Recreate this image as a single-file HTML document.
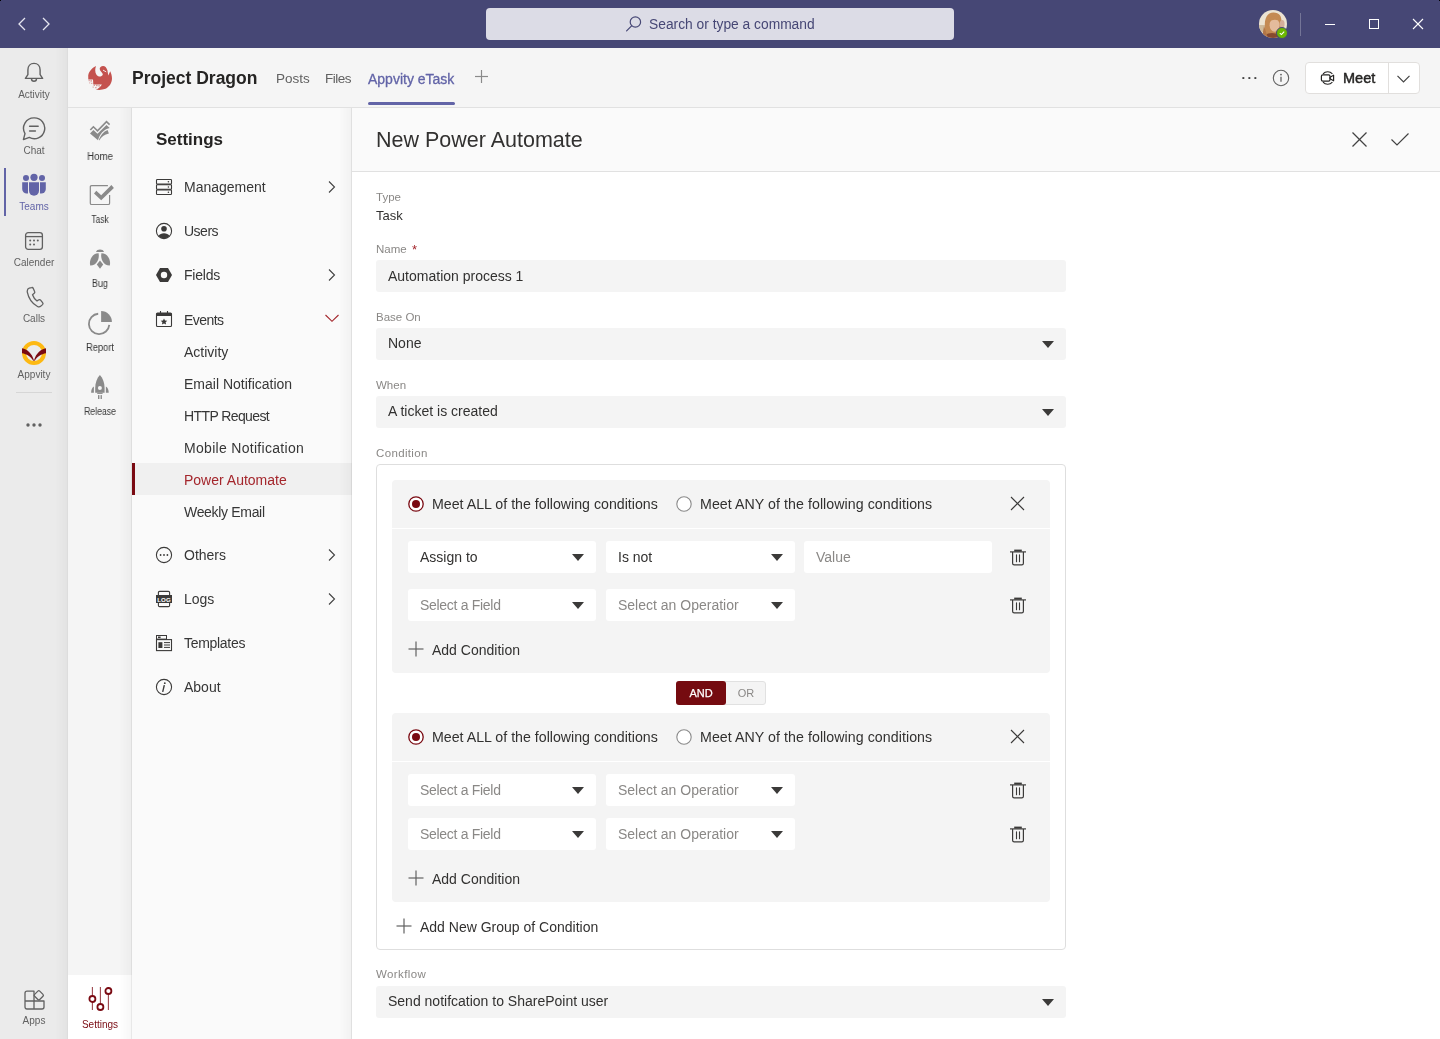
<!DOCTYPE html>
<html><head><meta charset="utf-8"><title>New Power Automate</title>
<style>
*{box-sizing:border-box;margin:0;padding:0}
html,body{width:1440px;height:1039px;overflow:hidden;font-family:"Liberation Sans", sans-serif;background:#fff;position:relative}
svg{display:block}
body>div{will-change:transform}
</style></head><body>
<div style="position:absolute;left:0px;top:0px;width:1440px;height:1039px;background:#fff"></div>
<div style="position:absolute;left:0px;top:0px;width:1440px;height:48px;background:#464775"></div>
<div style="position:absolute;left:0px;top:48px;width:68px;height:991px;background:#ebebeb"></div>
<div style="position:absolute;left:55px;top:48px;width:12px;height:991px;background:linear-gradient(90deg,rgba(0,0,0,0) 0%,rgba(0,0,0,0.03) 100%)"></div>
<div style="position:absolute;left:67px;top:48px;width:1px;height:991px;background:rgba(0,0,0,0.06)"></div>
<div style="position:absolute;left:68px;top:48px;width:1372px;height:60px;background:#f5f5f5"></div>
<div style="position:absolute;left:68px;top:107px;width:1372px;height:1px;background:#e1e1e1"></div>
<div style="position:absolute;left:68px;top:108px;width:64px;height:931px;background:#f5f5f5"></div>
<div style="position:absolute;left:132px;top:108px;width:220px;height:931px;background:#fafafa"></div>
<div style="position:absolute;left:352px;top:108px;width:1088px;height:931px;background:#fff"></div>
<div style="position:absolute;left:352px;top:108px;width:1088px;height:63px;background:#fafafa"></div>
<div style="position:absolute;left:352px;top:171px;width:1088px;height:1px;background:#e1e1e1"></div>
<svg style="position:absolute;left:14px;top:14px;" width="40" height="20" viewBox="0 0 40 20"><polyline points="11,4 5,10 11,16" fill="none" stroke="#e6e6f0" stroke-width="1.3"/><polyline points="29,4 35,10 29,16" fill="none" stroke="#e6e6f0" stroke-width="1.3"/></svg>
<div style="position:absolute;left:486px;top:8px;width:468px;height:32px;background:#dcdce6;border-radius:4px"></div>
<svg style="position:absolute;left:624px;top:14px;" width="20" height="20" viewBox="0 0 20 20"><circle cx="11.4" cy="8" r="5.2" fill="none" stroke="#464775" stroke-width="1.2"/><line x1="7.6" y1="11.8" x2="2.6" y2="16.8" stroke="#464775" stroke-width="1.2" stroke-linecap="round"/></svg>
<div style="position:absolute;left:649px;top:18.42px;font-size:13.8px;line-height:1;color:#464775;font-weight:400;white-space:nowrap;">Search or type a command</div>
<svg style="position:absolute;left:1259px;top:10px;" width="28" height="28" viewBox="0 0 28 28"><defs><clipPath id="avc"><circle cx="14" cy="14" r="14"/></clipPath><filter id="avb" x="-10%" y="-10%" width="120%" height="120%"><feGaussianBlur stdDeviation="0.7"/></filter></defs><g clip-path="url(#avc)"><rect width="28" height="28" fill="#ece3d2"/><g filter="url(#avb)"><rect x="-2" y="15" width="10" height="7" fill="#cfbb9c"/><path d="M6 18C5 8 8.5 2.6 14.5 2.6S22.5 6 22.6 12L22 19L13 28H5z" fill="#c48a52"/><ellipse cx="15.6" cy="15.2" rx="5" ry="6.6" fill="#e4bb9c"/><path d="M9.5 10.5C11 5.5 18 4.5 21 8.5L21.5 12C19 9.5 14 8.5 10 12z" fill="#c48a52"/><ellipse cx="23.2" cy="14" rx="2.4" ry="4" fill="#d6ae9a"/><ellipse cx="13" cy="30" rx="10" ry="7" fill="#874a2e"/><path d="M5 16l4 12H3z" fill="#b37646"/></g></g></svg>
<div style="position:absolute;left:1276px;top:27px;width:12px;height:12px;border-radius:50%;background:#6bb700;border:1px solid #464775"></div>
<svg style="position:absolute;left:1278px;top:29px;" width="8" height="8" viewBox="0 0 8 8"><polyline points="1.8,4.2 3.4,5.6 6.2,2.6" fill="none" stroke="#fff" stroke-width="1.1"/></svg>
<div style="position:absolute;left:1300px;top:13px;width:1px;height:23px;background:rgba(255,255,255,0.25)"></div>
<div style="position:absolute;left:1325px;top:24px;width:10px;height:1px;background:#fff"></div>
<div style="position:absolute;left:1369px;top:19px;width:10px;height:10px;border:1px solid #fff"></div>
<svg style="position:absolute;left:1412px;top:18px;" width="12" height="12" viewBox="0 0 12 12"><line x1="1" y1="1" x2="11" y2="11" stroke="#fff" stroke-width="1.1"/><line x1="11" y1="1" x2="1" y2="11" stroke="#fff" stroke-width="1.1"/></svg>
<svg style="position:absolute;left:24px;top:62px;" width="20" height="22" viewBox="0 0 20 22"><path d="M10 1.4C6.3 1.4 3.9 4.3 3.9 8V12.6L1.4 16.4H18.6L16.1 12.6V8C16.1 4.3 13.7 1.4 10 1.4Z" fill="none" stroke="#616161" stroke-width="1.4" stroke-linejoin="round"/><path d="M7.5 16.8a2.5 2.5 0 0 0 5 0" fill="none" stroke="#616161" stroke-width="1.4"/></svg>
<div style="position:absolute;left:4.00px;top:90.03px;width:60px;text-align:center;font-size:10px;line-height:1;color:#616161;font-weight:400;white-space:nowrap;">Activity</div>
<svg style="position:absolute;left:22px;top:116px;" width="24" height="26" viewBox="0 0 24 26"><path d="M12.1 1.9A10.4 10.4 0 1 1 7.3 21.4L1.4 23.6L3 17.6A10.4 10.4 0 0 1 12.1 1.9Z" fill="none" stroke="#616161" stroke-width="1.4" stroke-linejoin="round"/><line x1="7.6" y1="10.3" x2="16.2" y2="10.3" stroke="#616161" stroke-width="1.4" stroke-linecap="round"/><line x1="7.6" y1="15" x2="13.4" y2="15" stroke="#616161" stroke-width="1.4" stroke-linecap="round"/></svg>
<div style="position:absolute;left:4.00px;top:146.34px;width:60px;text-align:center;font-size:10px;line-height:1;color:#616161;font-weight:400;white-space:nowrap;">Chat</div>
<div style="position:absolute;left:4px;top:168px;width:2px;height:48px;background:#6264a7"></div>
<svg style="position:absolute;left:22px;top:173px;" width="24" height="24" viewBox="0 0 24 24"><circle cx="4" cy="5" r="3" fill="#6264a7"/><circle cx="12" cy="4.3" r="3.6" fill="#6264a7"/><circle cx="20" cy="5" r="3" fill="#6264a7"/><path d="M0.2 9.2h5.8v11.4H4.8A4.6 4.6 0 0 1 0.2 16z" fill="#6264a7"/><path d="M23.8 9.2H18v11.4h1.2A4.6 4.6 0 0 0 23.8 16z" fill="#6264a7"/><path d="M7 9.2h10v8.6a5 5 0 0 1-10 0z" fill="#6264a7"/></svg>
<div style="position:absolute;left:4.00px;top:201.53px;width:60px;text-align:center;font-size:10px;line-height:1;color:#6264a7;font-weight:400;white-space:nowrap;">Teams</div>
<svg style="position:absolute;left:24px;top:231px;" width="20" height="20" viewBox="0 0 20 20"><rect x="1.6" y="1.6" width="16.8" height="16.8" rx="2.6" fill="none" stroke="#616161" stroke-width="1.3"/><line x1="1.6" y1="5.6" x2="18.4" y2="5.6" stroke="#616161" stroke-width="1.3"/><g fill="#616161"><circle cx="6.2" cy="9.6" r="1"/><circle cx="10" cy="9.6" r="1"/><circle cx="13.8" cy="9.6" r="1"/><circle cx="6.2" cy="13.4" r="1"/><circle cx="10" cy="13.4" r="1"/></g></svg>
<div style="position:absolute;left:4.00px;top:258.04px;width:60px;text-align:center;font-size:10px;line-height:1;color:#616161;font-weight:400;white-space:nowrap;">Calender</div>
<svg style="position:absolute;left:24px;top:286px;" width="20" height="22" viewBox="0 0 20 22"><path d="M5.2 2.2l2.4-.6c.7-.2 1.4.2 1.7.9l1.3 3.1c.3.6.1 1.3-.4 1.7l-1.7 1.4c.9 2.6 2.4 4.6 4.5 6.2l1.9-1.1c.6-.3 1.3-.2 1.7.3l2 2.6c.5.6.4 1.4-.1 1.9l-1.6 1.5c-.9.8-2.3 1-3.4.4C8 17.5 4.6 12.4 3.3 6.1c-.2-1.8.6-3.5 1.9-3.9z" fill="none" stroke="#616161" stroke-width="1.3" stroke-linejoin="round"/></svg>
<div style="position:absolute;left:4.00px;top:313.84px;width:60px;text-align:center;font-size:10px;line-height:1;color:#616161;font-weight:400;white-space:nowrap;">Calls</div>
<svg style="position:absolute;left:21px;top:340px;" width="26" height="26" viewBox="0 0 26 26"><circle cx="13" cy="13" r="10" fill="none" stroke="#fdb913" stroke-width="4"/><path d="M1 8.2C6 9.2 11 13 13 20.5 15 13 20 9.2 25 8.2V13.2C20.5 13.8 16 16.8 13.6 20.8h-1.2C10 16.8 5.5 13.8 1 13.2z" fill="#7a0a12"/></svg>
<div style="position:absolute;left:4.00px;top:369.74px;width:60px;text-align:center;font-size:10px;line-height:1;color:#616161;font-weight:400;white-space:nowrap;">Appvity</div>
<div style="position:absolute;left:16px;top:392px;width:36px;height:1px;background:#d6d6d6"></div>
<svg style="position:absolute;left:24px;top:420px;" width="20" height="10" viewBox="0 0 20 10"><circle cx="4" cy="5" r="1.7" fill="#616161"/><circle cx="10" cy="5" r="1.7" fill="#616161"/><circle cx="16" cy="5" r="1.7" fill="#616161"/></svg>
<svg style="position:absolute;left:23px;top:988px;" width="22" height="22" viewBox="0 0 22 22"><path d="M2 5.2Q2 3.2 4 3.2H11V13H21V19Q21 21 19 21H4Q2 21 2 19Z" fill="none" stroke="#616161" stroke-width="1.3" stroke-linejoin="round"/><path d="M2 13H11V21" fill="none" stroke="#616161" stroke-width="1.3"/><rect x="12.2" y="3.7" width="7.2" height="7.2" rx="1.3" transform="rotate(45 15.8 7.3)" fill="#ebebeb" stroke="#616161" stroke-width="1.3"/></svg>
<div style="position:absolute;left:4.00px;top:1016.03px;width:60px;text-align:center;font-size:10px;line-height:1;color:#616161;font-weight:400;white-space:nowrap;">Apps</div>
<svg style="position:absolute;left:88px;top:66px;" width="24" height="24" viewBox="0 0 24 24"><path d="M8 0C4.5 1.5 1 5 0.2 9.5L0.3 13.4L5 13.6L5.3 18.4L13.9 18.4C12.5 21 10 22.8 7.7 23.6C11 24.3 14.5 23.9 17.6 22.8C21.5 20.6 24 16.8 24 12.5C24 10 23.3 7.5 22.2 5.2L20.3 9.6L19.4 4.3C18.5 1.5 17 0 15.1 0C13 0.1 11.7 1.4 11.7 2.8C11.8 4.4 13 5.6 14.5 7.4C15.2 8.4 14.8 9.6 12.6 10.5C10.6 10.6 9 9.6 8.2 8.2C7.1 6.5 6.8 3.5 8 0Z" fill="#c4524e"/><path d="M15 4.1L18.2 5.9" stroke="#f5f5f5" stroke-width="0.9"/><g fill="#c4524e" opacity="0.55"><rect x="0.6" y="14" width="1.2" height="1.2"/><rect x="2.4" y="14.2" width="1.6" height="1.4"/><rect x="1.2" y="16.4" width="1" height="1"/><rect x="3" y="16.8" width="1.4" height="1"/><rect x="5.6" y="18.8" width="1.4" height="1.2"/><rect x="8" y="18.8" width="1.6" height="1.4"/><rect x="10.4" y="19" width="1.4" height="1.6"/><rect x="4.6" y="20.6" width="1.2" height="1"/><rect x="7" y="21.2" width="1.6" height="1"/></g></svg>
<div style="position:absolute;left:132px;top:69.69px;font-size:17.5px;line-height:1;color:#252423;font-weight:700;white-space:nowrap;">Project Dragon</div>
<div style="position:absolute;left:276px;top:72.27px;font-size:13.5px;line-height:1;color:#616161;font-weight:400;white-space:nowrap;">Posts</div>
<div style="position:absolute;left:325px;top:72.27px;font-size:13.5px;line-height:1;color:#616161;font-weight:400;white-space:nowrap;letter-spacing:-0.5px">Files</div>
<div style="position:absolute;left:368px;top:71.85px;font-size:14px;line-height:1;color:#6264a7;font-weight:400;white-space:nowrap;-webkit-text-stroke:0.3px #6264a7">Appvity eTask</div>
<div style="position:absolute;left:368px;top:101.8px;width:87px;height:2.6px;background:#6264a7;border-radius:2px"></div>
<svg style="position:absolute;left:474px;top:69px;" width="16" height="16" viewBox="0 0 16 16"><line x1="7.5" y1="1" x2="7.5" y2="14" stroke="#8a8a8a" stroke-width="1.2"/><line x1="1" y1="7.5" x2="14" y2="7.5" stroke="#8a8a8a" stroke-width="1.2"/></svg>
<svg style="position:absolute;left:1240px;top:74px;" width="18" height="8" viewBox="0 0 18 8"><rect x="2.4" y="3.1" width="1.9" height="1.9" fill="#424242"/><rect x="8.4" y="3.1" width="1.9" height="1.9" fill="#424242"/><rect x="14.4" y="3.1" width="1.9" height="1.9" fill="#424242"/></svg>
<svg style="position:absolute;left:1272px;top:69px;" width="18" height="18" viewBox="0 0 18 18"><circle cx="9" cy="9" r="7.7" fill="none" stroke="#616161" stroke-width="1.1"/><circle cx="9" cy="5.6" r="0.9" fill="#616161"/><line x1="9" y1="7.8" x2="9" y2="12.8" stroke="#616161" stroke-width="1.3"/></svg>
<div style="position:absolute;left:1305px;top:62px;width:115px;height:32px;background:#fff;border:1px solid #e1dfdd;border-radius:4px"></div>
<div style="position:absolute;left:1388px;top:63px;width:1px;height:30px;background:#e1dfdd"></div>
<svg style="position:absolute;left:1319px;top:69px;" width="18" height="18" viewBox="0 0 18 18"><path d="M4 4.8A6.4 6.4 0 0 1 13.4 4.8" fill="none" stroke="#252423" stroke-width="1.1"/><path d="M4 13.2A6.4 6.4 0 0 0 13.4 13.2" fill="none" stroke="#252423" stroke-width="1.1"/><rect x="2.4" y="5.8" width="8.6" height="6.4" rx="1.4" fill="none" stroke="#252423" stroke-width="1.2"/><path d="M11 8.2L14.6 6.2V11.8L11 9.8z" fill="none" stroke="#252423" stroke-width="1.2" stroke-linejoin="round"/></svg>
<div style="position:absolute;left:1343px;top:71.43px;font-size:14.5px;line-height:1;color:#252423;font-weight:400;white-space:nowrap;-webkit-text-stroke:0.45px #252423">Meet</div>
<svg style="position:absolute;left:1396px;top:74px;" width="16" height="10" viewBox="0 0 16 10"><polyline points="1.5,1.8 7.5,7.8 13.5,1.8" fill="none" stroke="#424242" stroke-width="1.2"/></svg>
<svg style="position:absolute;left:86px;top:116px;" width="28" height="28" viewBox="0 0 28 28"><g fill="#8a8a8a"><path d="M4 17.5L7.4 14L11.5 17.8L20.5 8.9L23.7 12.1C21.5 12.6 19.5 13.6 18 14.8C15.5 16.6 13.2 19.6 12 24.3Z"/><path d="M12.9 24.3C14.2 19.6 17.5 15.6 21.6 14L22.9 17.5C18.5 18.6 15 21 13.5 24.3Z"/></g><path d="M4.3 14L7.4 10.8L11.5 14.8L20.5 5.7L23.6 8.6" fill="none" stroke="#8a8a8a" stroke-width="1.6"/></svg>
<div style="position:absolute;left:70.00px;top:151.73px;width:60px;text-align:center;font-size:10px;line-height:1;color:#363636;font-weight:400;white-space:nowrap;transform:scaleX(0.97)">Home</div>
<svg style="position:absolute;left:84px;top:180px;" width="32" height="32" viewBox="0 0 32 32"><path d="M23.9 5.7H7.6Q6.3 5.7 6.3 7V23.2Q6.3 24.5 7.6 24.5H24.3Q25.6 24.5 25.6 23.2V15.1" fill="none" stroke="#8a8a8a" stroke-width="1.2"/><path d="M10 13.5L12.3 10.8L17.2 15.3L27.4 5.1L29.9 7.9L17.2 20.3Z" fill="#8a8a8a"/></svg>
<div style="position:absolute;left:70.00px;top:215.03px;width:60px;text-align:center;font-size:10px;line-height:1;color:#363636;font-weight:400;white-space:nowrap;transform:scaleX(0.84)">Task</div>
<svg style="position:absolute;left:86px;top:244px;" width="28" height="28" viewBox="0 0 28 28"><g fill="#8a8a8a"><path d="M10 7.9C10.6 4.6 17.4 4.6 18 7.9Z"/><path d="M12.6 9.2C6.8 9 2.8 15.5 4.2 21.6C10.4 21.8 13.8 15 12.6 9.2Z"/><path d="M15.4 9.2C21.2 9 25.2 15.5 23.8 21.6C17.6 21.8 14.2 15 15.4 9.2Z"/><path d="M14 16.4L17.2 20.6L14 24.8L10.8 20.6Z"/></g></svg>
<div style="position:absolute;left:70.00px;top:279.04px;width:60px;text-align:center;font-size:10px;line-height:1;color:#363636;font-weight:400;white-space:nowrap;transform:scaleX(0.9)">Bug</div>
<svg style="position:absolute;left:84px;top:306px;" width="32" height="32" viewBox="0 0 32 32"><path d="M14.2 7.74A10.2 10.2 0 1 0 25.26 18.8" fill="none" stroke="#8a8a8a" stroke-width="1.8"/><path d="M17.1 15.9V5.1A10.8 10.8 0 0 1 27.9 15.9Z" fill="#8a8a8a"/></svg>
<div style="position:absolute;left:70.00px;top:343.04px;width:60px;text-align:center;font-size:10px;line-height:1;color:#363636;font-weight:400;white-space:nowrap;transform:scaleX(0.93)">Report</div>
<svg style="position:absolute;left:84px;top:370px;" width="32" height="32" viewBox="0 0 32 32"><g fill="#8a8a8a"><path d="M15.9 5.1C13 8 11.2 13 11.2 18V22.8H20.6V18C20.6 13 18.8 8 15.9 5.1Z"/><rect x="13.2" y="22.6" width="5.4" height="1.3"/><path d="M9.9 16.6C8 17.8 7.1 20 7.1 22.8H9.9Z"/><path d="M21.9 16.6C23.8 17.8 24.7 20 24.7 22.8H21.9Z"/><rect x="14" y="25.1" width="1.3" height="3.9"/><rect x="16.6" y="25.1" width="1.3" height="3.9"/></g><rect x="15.3" y="25.1" width="1.3" height="3.9" fill="#c4c4c4"/><circle cx="15.9" cy="18" r="2" fill="#f5f5f5"/></svg>
<div style="position:absolute;left:70.00px;top:407.04px;width:60px;text-align:center;font-size:10px;line-height:1;color:#363636;font-weight:400;white-space:nowrap;transform:scaleX(0.87)">Release</div>
<div style="position:absolute;left:68px;top:975px;width:64px;height:64px;background:#fff"></div>
<svg style="position:absolute;left:86.6px;top:986px;" width="28" height="26" viewBox="0 0 28 26"><line x1="5.4" y1="1" x2="5.4" y2="24" stroke="#7a0a12" stroke-width="1.1" opacity="0.75"/><line x1="13.4" y1="1" x2="13.4" y2="24" stroke="#7a0a12" stroke-width="1.1" opacity="0.75"/><line x1="21.4" y1="1" x2="21.4" y2="24" stroke="#7a0a12" stroke-width="1.1" opacity="0.75"/><circle cx="5.4" cy="13" r="3" fill="#fff" stroke="#7a0a12" stroke-width="1.8"/><circle cx="13.4" cy="21" r="3" fill="#fff" stroke="#7a0a12" stroke-width="1.8"/><circle cx="21.4" cy="5" r="3" fill="#fff" stroke="#7a0a12" stroke-width="1.8"/></svg>
<div style="position:absolute;left:70.00px;top:1019.53px;width:60px;text-align:center;font-size:10px;line-height:1;color:#7a0a12;font-weight:400;white-space:nowrap;">Settings</div>
<div style="position:absolute;left:156px;top:130.61px;font-size:17px;line-height:1;color:#252423;font-weight:700;white-space:nowrap;">Settings</div>
<svg style="position:absolute;left:155px;top:178px;" width="18" height="18" viewBox="0 0 18 18"><rect x="1.5" y="1.5" width="15" height="4.6" rx="0.8" fill="none" stroke="#3b3a39" stroke-width="1.1"/><rect x="1.5" y="6.7" width="15" height="4.6" rx="0.8" fill="none" stroke="#3b3a39" stroke-width="1.1"/><rect x="1.5" y="11.9" width="15" height="4.6" rx="0.8" fill="none" stroke="#3b3a39" stroke-width="1.1"/><circle cx="13.4" cy="3.8" r="0.8" fill="#3b3a39"/><circle cx="13.4" cy="9" r="0.8" fill="#3b3a39"/><circle cx="13.4" cy="14.2" r="0.8" fill="#3b3a39"/></svg>
<div style="position:absolute;left:184px;top:180.15px;font-size:14px;line-height:1;color:#363636;font-weight:400;white-space:nowrap;">Management</div>
<svg style="position:absolute;left:326px;top:180px;" width="12" height="14" viewBox="0 0 12 14"><polyline points="3,1.5 8.5,7 3,12.5" fill="none" stroke="#424242" stroke-width="1.1"/></svg>
<svg style="position:absolute;left:155px;top:222px;" width="18" height="18" viewBox="0 0 18 18"><circle cx="9" cy="9" r="7.6" fill="none" stroke="#3b3a39" stroke-width="1.1"/><circle cx="9" cy="6.8" r="2.8" fill="#3b3a39"/><path d="M3.4 14a7.6 7.6 0 0 0 11.2 0c-1.2-1.8-3.2-2.8-5.6-2.8s-4.4 1-5.6 2.8z" fill="#3b3a39"/></svg>
<div style="position:absolute;left:184px;top:224.15px;font-size:14px;line-height:1;color:#363636;font-weight:400;white-space:nowrap;letter-spacing:-0.5px">Users</div>
<svg style="position:absolute;left:155px;top:267px;" width="18" height="16" viewBox="0 0 18 16"><path d="M5 1h8l4 7-4 7H5L1 8z" fill="#3b3a39"/><circle cx="9" cy="8" r="3.2" fill="#fafafa"/></svg>
<div style="position:absolute;left:184px;top:268.15px;font-size:14px;line-height:1;color:#363636;font-weight:400;white-space:nowrap;letter-spacing:-0.2px">Fields</div>
<svg style="position:absolute;left:326px;top:268px;" width="12" height="14" viewBox="0 0 12 14"><polyline points="3,1.5 8.5,7 3,12.5" fill="none" stroke="#424242" stroke-width="1.1"/></svg>
<svg style="position:absolute;left:155px;top:310px;" width="18" height="18" viewBox="0 0 18 18"><rect x="1.5" y="3" width="15" height="13.5" rx="1" fill="none" stroke="#3b3a39" stroke-width="1.1"/><rect x="1.5" y="3" width="15" height="3" fill="#3b3a39"/><line x1="5.5" y1="1" x2="5.5" y2="4" stroke="#3b3a39" stroke-width="1.1"/><line x1="12.5" y1="1" x2="12.5" y2="4" stroke="#3b3a39" stroke-width="1.1"/><path d="M9 8.4l1 2.1 2.3.3-1.7 1.5.5 2.3L9 13.4l-2.1 1.2.5-2.3-1.7-1.5 2.3-.3z" fill="#3b3a39"/></svg>
<div style="position:absolute;left:184px;top:312.65px;font-size:14px;line-height:1;color:#363636;font-weight:400;white-space:nowrap;letter-spacing:-0.55px">Events</div>
<svg style="position:absolute;left:324px;top:313px;" width="16" height="10" viewBox="0 0 16 10"><polyline points="1.5,2 8,8.3 14.5,2" fill="none" stroke="#a4262c" stroke-width="1.1"/></svg>
<div style="position:absolute;left:184px;top:345.15px;font-size:14px;line-height:1;color:#363636;font-weight:400;white-space:nowrap;letter-spacing:0px">Activity</div>
<div style="position:absolute;left:184px;top:377.15px;font-size:14px;line-height:1;color:#363636;font-weight:400;white-space:nowrap;letter-spacing:0px">Email Notification</div>
<div style="position:absolute;left:184px;top:409.15px;font-size:14px;line-height:1;color:#363636;font-weight:400;white-space:nowrap;letter-spacing:-0.6px">HTTP Request</div>
<div style="position:absolute;left:184px;top:441.15px;font-size:14px;line-height:1;color:#363636;font-weight:400;white-space:nowrap;letter-spacing:0.3px">Mobile Notification</div>
<div style="position:absolute;left:132px;top:463px;width:220px;height:32px;background:#f0f0f0"></div>
<div style="position:absolute;left:132px;top:463px;width:3px;height:32px;background:#7a0a12"></div>
<div style="position:absolute;left:184px;top:473.15px;font-size:14px;line-height:1;color:#a4262c;font-weight:400;white-space:nowrap;">Power Automate</div>
<div style="position:absolute;left:184px;top:505.15px;font-size:14px;line-height:1;color:#363636;font-weight:400;white-space:nowrap;letter-spacing:-0.32px">Weekly Email</div>
<svg style="position:absolute;left:155px;top:546px;" width="18" height="18" viewBox="0 0 18 18"><circle cx="9" cy="9" r="7.6" fill="none" stroke="#3b3a39" stroke-width="1.1"/><circle cx="5.6" cy="9" r="0.9" fill="#3b3a39"/><circle cx="9" cy="9" r="0.9" fill="#3b3a39"/><circle cx="12.4" cy="9" r="0.9" fill="#3b3a39"/></svg>
<div style="position:absolute;left:184px;top:548.15px;font-size:14px;line-height:1;color:#363636;font-weight:400;white-space:nowrap;">Others</div>
<svg style="position:absolute;left:326px;top:548px;" width="12" height="14" viewBox="0 0 12 14"><polyline points="3,1.5 8.5,7 3,12.5" fill="none" stroke="#424242" stroke-width="1.1"/></svg>
<svg style="position:absolute;left:155px;top:590px;" width="18" height="18" viewBox="0 0 18 18"><path d="M3.4 5V2.6c0-.7.5-1.2 1.2-1.2h8.8c.7 0 1.2.5 1.2 1.2V5M3.4 13v2.4c0 .7.5 1.2 1.2 1.2h8.8c.7 0 1.2-.5 1.2-1.2V13" fill="none" stroke="#3b3a39" stroke-width="1.1"/><rect x="1" y="5" width="16" height="8" fill="#3b3a39"/><text x="9" y="11.6" font-size="6.2" font-family="Liberation Sans" font-weight="700" fill="#fff" text-anchor="middle">LOG</text></svg>
<div style="position:absolute;left:184px;top:592.15px;font-size:14px;line-height:1;color:#363636;font-weight:400;white-space:nowrap;">Logs</div>
<svg style="position:absolute;left:326px;top:592px;" width="12" height="14" viewBox="0 0 12 14"><polyline points="3,1.5 8.5,7 3,12.5" fill="none" stroke="#424242" stroke-width="1.1"/></svg>
<svg style="position:absolute;left:155px;top:634px;" width="18" height="18" viewBox="0 0 18 18"><rect x="1.5" y="1.5" width="10" height="3.6" fill="none" stroke="#3b3a39" stroke-width="1"/><rect x="3" y="2.5" width="2.6" height="1.6" fill="#3b3a39"/><rect x="1.5" y="5.6" width="15" height="11" fill="none" stroke="#3b3a39" stroke-width="1.1"/><rect x="3.4" y="8.2" width="4" height="5.8" fill="#3b3a39"/><line x1="9" y1="8.6" x2="15" y2="8.6" stroke="#3b3a39" stroke-width="1"/><line x1="9" y1="11" x2="15" y2="11" stroke="#3b3a39" stroke-width="1"/><line x1="9" y1="13.4" x2="15" y2="13.4" stroke="#3b3a39" stroke-width="1"/></svg>
<div style="position:absolute;left:184px;top:636.15px;font-size:14px;line-height:1;color:#363636;font-weight:400;white-space:nowrap;letter-spacing:-0.3px">Templates</div>
<svg style="position:absolute;left:155px;top:678px;" width="18" height="18" viewBox="0 0 18 18"><circle cx="9" cy="9" r="7.6" fill="none" stroke="#3b3a39" stroke-width="1.1"/><circle cx="9.8" cy="5.2" r="0.9" fill="#3b3a39"/><path d="M9.2 7.6l-1.4 5.8" stroke="#3b3a39" stroke-width="1.4" stroke-linecap="round"/></svg>
<div style="position:absolute;left:184px;top:680.15px;font-size:14px;line-height:1;color:#363636;font-weight:400;white-space:nowrap;">About</div>
<div style="position:absolute;left:376px;top:129.80px;font-size:21.5px;line-height:1;color:#323130;font-weight:400;white-space:nowrap;">New Power Automate</div>
<svg style="position:absolute;left:1351px;top:131px;" width="17" height="17" viewBox="0 0 17 17"><line x1="1.5" y1="1.5" x2="15.5" y2="15.5" stroke="#424242" stroke-width="1.2"/><line x1="15.5" y1="1.5" x2="1.5" y2="15.5" stroke="#424242" stroke-width="1.2"/></svg>
<svg style="position:absolute;left:1390px;top:132px;" width="20" height="15" viewBox="0 0 20 15"><polyline points="1.5,7.5 7,13 18.5,1.5" fill="none" stroke="#424242" stroke-width="1.2"/></svg>
<div style="position:absolute;left:376px;top:192.27px;font-size:11.5px;line-height:1;color:#8a8886;font-weight:400;white-space:nowrap;">Type</div>
<div style="position:absolute;left:376px;top:209.00px;font-size:13px;line-height:1;color:#323130;font-weight:400;white-space:nowrap;">Task</div>
<div style="position:absolute;left:376px;top:243.87px;font-size:11.5px;line-height:1;color:#8a8886;font-weight:400;white-space:nowrap;">Name</div>
<div style="position:absolute;left:412px;top:243.00px;font-size:13px;line-height:1;color:#a4262c;font-weight:400;white-space:nowrap;">*</div>
<div style="position:absolute;left:376px;top:260px;width:690px;height:32px;background:#f4f4f4;border-radius:3px"></div>
<div style="position:absolute;left:388px;top:269.15px;font-size:14px;line-height:1;color:#323130;font-weight:400;white-space:nowrap;">Automation process 1</div>
<div style="position:absolute;left:376px;top:312.47px;font-size:11.5px;line-height:1;color:#8a8886;font-weight:400;white-space:nowrap;">Base On</div>
<div style="position:absolute;left:376px;top:328px;width:690px;height:32px;background:#f4f4f4;border-radius:3px"></div>
<div style="position:absolute;left:388px;top:336.15px;font-size:14px;line-height:1;color:#323130;font-weight:400;white-space:nowrap;">None</div>
<svg style="position:absolute;left:1042px;top:341px;" width="12" height="7" viewBox="0 0 12 7"><path d="M0 0h12L6 7z" fill="#3b3a39"/></svg>
<div style="position:absolute;left:376px;top:380.27px;font-size:11.5px;line-height:1;color:#8a8886;font-weight:400;white-space:nowrap;">When</div>
<div style="position:absolute;left:376px;top:396px;width:690px;height:32px;background:#f4f4f4;border-radius:3px"></div>
<div style="position:absolute;left:388px;top:404.15px;font-size:14px;line-height:1;color:#323130;font-weight:400;white-space:nowrap;">A ticket is created</div>
<svg style="position:absolute;left:1042px;top:409px;" width="12" height="7" viewBox="0 0 12 7"><path d="M0 0h12L6 7z" fill="#3b3a39"/></svg>
<div style="position:absolute;left:376px;top:447.87px;font-size:11.5px;line-height:1;color:#8a8886;font-weight:400;white-space:nowrap;letter-spacing:0.35px">Condition</div>
<div style="position:absolute;left:376px;top:464px;width:690px;height:486px;border:1px solid #dedede;border-radius:4px;background:#fff"></div>
<div style="position:absolute;left:392px;top:480px;width:658px;height:193px;background:#f4f4f4;border-radius:4px"></div>
<div style="position:absolute;left:392px;top:528px;width:658px;height:1px;background:#fff"></div>
<svg style="position:absolute;left:408px;top:496px;" width="16" height="16" viewBox="0 0 16 16"><circle cx="8" cy="8" r="7.2" fill="#fff" stroke="#7a0a12" stroke-width="1.3"/><circle cx="8" cy="8" r="4" fill="#7a0a12"/></svg>
<div style="position:absolute;left:432px;top:496.98px;font-size:14.2px;line-height:1;color:#323130;font-weight:400;white-space:nowrap;">Meet ALL of the following conditions</div>
<svg style="position:absolute;left:676px;top:496px;" width="16" height="16" viewBox="0 0 16 16"><circle cx="8" cy="8" r="7.2" fill="#fff" stroke="#8a8a8a" stroke-width="1.1"/></svg>
<div style="position:absolute;left:700px;top:496.98px;font-size:14.2px;line-height:1;color:#323130;font-weight:400;white-space:nowrap;letter-spacing:0.06px">Meet ANY of the following conditions</div>
<svg style="position:absolute;left:1010px;top:496px;" width="15" height="15" viewBox="0 0 15 15"><line x1="1" y1="1" x2="14" y2="14" stroke="#3b3a39" stroke-width="1.1"/><line x1="14" y1="1" x2="1" y2="14" stroke="#3b3a39" stroke-width="1.1"/></svg>
<div style="position:absolute;left:408px;top:541px;width:188px;height:32px;background:#fff;border-radius:3px"></div>
<div style="position:absolute;left:420px;top:550.15px;font-size:14px;line-height:1;color:#323130;font-weight:400;white-space:nowrap;">Assign to</div>
<svg style="position:absolute;left:572px;top:554px;" width="12" height="7" viewBox="0 0 12 7"><path d="M0 0h12L6 7z" fill="#3b3a39"/></svg>
<div style="position:absolute;left:606px;top:541px;width:189px;height:32px;background:#fff;border-radius:3px"></div>
<div style="position:absolute;left:618px;top:550.15px;font-size:14px;line-height:1;color:#323130;font-weight:400;white-space:nowrap;">Is not</div>
<svg style="position:absolute;left:771px;top:554px;" width="12" height="7" viewBox="0 0 12 7"><path d="M0 0h12L6 7z" fill="#3b3a39"/></svg>
<div style="position:absolute;left:804px;top:541px;width:188px;height:32px;background:#fff;border-radius:3px"></div>
<div style="position:absolute;left:816px;top:550.15px;font-size:14px;line-height:1;color:#8a8886;font-weight:400;white-space:nowrap;">Value</div>
<svg style="position:absolute;left:1010px;top:548.6px;" width="16" height="17" viewBox="0 0 16 17"><rect x="4.2" y="0.6" width="7.6" height="2" fill="#3b3a39"/><line x1="0" y1="2.9" x2="16" y2="2.9" stroke="#3b3a39" stroke-width="1.2"/><path d="M2.6 3v11.2c0 .9.7 1.6 1.6 1.6h7.6c.9 0 1.6-.7 1.6-1.6V3" fill="none" stroke="#3b3a39" stroke-width="1.2"/><line x1="6.5" y1="5.4" x2="6.5" y2="13.2" stroke="#3b3a39" stroke-width="1.1"/><line x1="9.5" y1="5.4" x2="9.5" y2="13.2" stroke="#3b3a39" stroke-width="1.1"/></svg>
<div style="position:absolute;left:408px;top:589px;width:188px;height:32px;background:#fff;border-radius:3px"></div>
<div style="position:absolute;left:420px;top:598.15px;font-size:14px;line-height:1;color:#8a8886;font-weight:400;white-space:nowrap;letter-spacing:-0.3px">Select a Field</div>
<svg style="position:absolute;left:572px;top:602px;" width="12" height="7" viewBox="0 0 12 7"><path d="M0 0h12L6 7z" fill="#3b3a39"/></svg>
<div style="position:absolute;left:606px;top:589px;width:189px;height:32px;background:#fff;border-radius:3px"></div>
<div style="position:absolute;left:618px;top:598.15px;font-size:14px;line-height:1;color:#8a8886;font-weight:400;white-space:nowrap;">Select an Operatior</div>
<svg style="position:absolute;left:771px;top:602px;" width="12" height="7" viewBox="0 0 12 7"><path d="M0 0h12L6 7z" fill="#3b3a39"/></svg>
<svg style="position:absolute;left:1010px;top:596.6px;" width="16" height="17" viewBox="0 0 16 17"><rect x="4.2" y="0.6" width="7.6" height="2" fill="#3b3a39"/><line x1="0" y1="2.9" x2="16" y2="2.9" stroke="#3b3a39" stroke-width="1.2"/><path d="M2.6 3v11.2c0 .9.7 1.6 1.6 1.6h7.6c.9 0 1.6-.7 1.6-1.6V3" fill="none" stroke="#3b3a39" stroke-width="1.2"/><line x1="6.5" y1="5.4" x2="6.5" y2="13.2" stroke="#3b3a39" stroke-width="1.1"/><line x1="9.5" y1="5.4" x2="9.5" y2="13.2" stroke="#3b3a39" stroke-width="1.1"/></svg>
<svg style="position:absolute;left:408px;top:641px;" width="16" height="16" viewBox="0 0 16 16"><line x1="8" y1="0.5" x2="8" y2="15.5" stroke="#616161" stroke-width="1.2"/><line x1="0.5" y1="8" x2="15.5" y2="8" stroke="#616161" stroke-width="1.2"/></svg>
<div style="position:absolute;left:432px;top:643.15px;font-size:14px;line-height:1;color:#323130;font-weight:400;white-space:nowrap;">Add Condition</div>
<div style="position:absolute;left:676px;top:681px;width:90px;height:24px;background:#f4f4f4;border:1px solid #e1e1e1;border-radius:3px"></div>
<div style="position:absolute;left:676px;top:681px;width:50px;height:24px;background:#750b10;border-radius:3px"></div>
<div style="position:absolute;left:676.00px;top:687.69px;width:50px;text-align:center;font-size:11px;line-height:1;color:#fff;font-weight:400;white-space:nowrap;-webkit-text-stroke:0.25px #fff">AND</div>
<div style="position:absolute;left:726.00px;top:687.69px;width:40px;text-align:center;font-size:11px;line-height:1;color:#8a8886;font-weight:400;white-space:nowrap;">OR</div>
<div style="position:absolute;left:392px;top:713px;width:658px;height:189px;background:#f4f4f4;border-radius:4px"></div>
<div style="position:absolute;left:392px;top:761px;width:658px;height:1px;background:#fff"></div>
<svg style="position:absolute;left:408px;top:729px;" width="16" height="16" viewBox="0 0 16 16"><circle cx="8" cy="8" r="7.2" fill="#fff" stroke="#7a0a12" stroke-width="1.3"/><circle cx="8" cy="8" r="4" fill="#7a0a12"/></svg>
<div style="position:absolute;left:432px;top:729.98px;font-size:14.2px;line-height:1;color:#323130;font-weight:400;white-space:nowrap;">Meet ALL of the following conditions</div>
<svg style="position:absolute;left:676px;top:729px;" width="16" height="16" viewBox="0 0 16 16"><circle cx="8" cy="8" r="7.2" fill="#fff" stroke="#8a8a8a" stroke-width="1.1"/></svg>
<div style="position:absolute;left:700px;top:729.98px;font-size:14.2px;line-height:1;color:#323130;font-weight:400;white-space:nowrap;letter-spacing:0.06px">Meet ANY of the following conditions</div>
<svg style="position:absolute;left:1010px;top:729px;" width="15" height="15" viewBox="0 0 15 15"><line x1="1" y1="1" x2="14" y2="14" stroke="#3b3a39" stroke-width="1.1"/><line x1="14" y1="1" x2="1" y2="14" stroke="#3b3a39" stroke-width="1.1"/></svg>
<div style="position:absolute;left:408px;top:774px;width:188px;height:32px;background:#fff;border-radius:3px"></div>
<div style="position:absolute;left:420px;top:783.15px;font-size:14px;line-height:1;color:#8a8886;font-weight:400;white-space:nowrap;letter-spacing:-0.3px">Select a Field</div>
<svg style="position:absolute;left:572px;top:787px;" width="12" height="7" viewBox="0 0 12 7"><path d="M0 0h12L6 7z" fill="#3b3a39"/></svg>
<div style="position:absolute;left:606px;top:774px;width:189px;height:32px;background:#fff;border-radius:3px"></div>
<div style="position:absolute;left:618px;top:783.15px;font-size:14px;line-height:1;color:#8a8886;font-weight:400;white-space:nowrap;">Select an Operatior</div>
<svg style="position:absolute;left:771px;top:787px;" width="12" height="7" viewBox="0 0 12 7"><path d="M0 0h12L6 7z" fill="#3b3a39"/></svg>
<svg style="position:absolute;left:1010px;top:781.6px;" width="16" height="17" viewBox="0 0 16 17"><rect x="4.2" y="0.6" width="7.6" height="2" fill="#3b3a39"/><line x1="0" y1="2.9" x2="16" y2="2.9" stroke="#3b3a39" stroke-width="1.2"/><path d="M2.6 3v11.2c0 .9.7 1.6 1.6 1.6h7.6c.9 0 1.6-.7 1.6-1.6V3" fill="none" stroke="#3b3a39" stroke-width="1.2"/><line x1="6.5" y1="5.4" x2="6.5" y2="13.2" stroke="#3b3a39" stroke-width="1.1"/><line x1="9.5" y1="5.4" x2="9.5" y2="13.2" stroke="#3b3a39" stroke-width="1.1"/></svg>
<div style="position:absolute;left:408px;top:818px;width:188px;height:32px;background:#fff;border-radius:3px"></div>
<div style="position:absolute;left:420px;top:827.15px;font-size:14px;line-height:1;color:#8a8886;font-weight:400;white-space:nowrap;letter-spacing:-0.3px">Select a Field</div>
<svg style="position:absolute;left:572px;top:831px;" width="12" height="7" viewBox="0 0 12 7"><path d="M0 0h12L6 7z" fill="#3b3a39"/></svg>
<div style="position:absolute;left:606px;top:818px;width:189px;height:32px;background:#fff;border-radius:3px"></div>
<div style="position:absolute;left:618px;top:827.15px;font-size:14px;line-height:1;color:#8a8886;font-weight:400;white-space:nowrap;">Select an Operatior</div>
<svg style="position:absolute;left:771px;top:831px;" width="12" height="7" viewBox="0 0 12 7"><path d="M0 0h12L6 7z" fill="#3b3a39"/></svg>
<svg style="position:absolute;left:1010px;top:825.6px;" width="16" height="17" viewBox="0 0 16 17"><rect x="4.2" y="0.6" width="7.6" height="2" fill="#3b3a39"/><line x1="0" y1="2.9" x2="16" y2="2.9" stroke="#3b3a39" stroke-width="1.2"/><path d="M2.6 3v11.2c0 .9.7 1.6 1.6 1.6h7.6c.9 0 1.6-.7 1.6-1.6V3" fill="none" stroke="#3b3a39" stroke-width="1.2"/><line x1="6.5" y1="5.4" x2="6.5" y2="13.2" stroke="#3b3a39" stroke-width="1.1"/><line x1="9.5" y1="5.4" x2="9.5" y2="13.2" stroke="#3b3a39" stroke-width="1.1"/></svg>
<svg style="position:absolute;left:408px;top:870px;" width="16" height="16" viewBox="0 0 16 16"><line x1="8" y1="0.5" x2="8" y2="15.5" stroke="#616161" stroke-width="1.2"/><line x1="0.5" y1="8" x2="15.5" y2="8" stroke="#616161" stroke-width="1.2"/></svg>
<div style="position:absolute;left:432px;top:872.15px;font-size:14px;line-height:1;color:#323130;font-weight:400;white-space:nowrap;">Add Condition</div>
<svg style="position:absolute;left:396px;top:918px;" width="16" height="16" viewBox="0 0 16 16"><line x1="8" y1="0.5" x2="8" y2="15.5" stroke="#616161" stroke-width="1.2"/><line x1="0.5" y1="8" x2="15.5" y2="8" stroke="#616161" stroke-width="1.2"/></svg>
<div style="position:absolute;left:420px;top:920.15px;font-size:14px;line-height:1;color:#323130;font-weight:400;white-space:nowrap;">Add New Group of Condition</div>
<div style="position:absolute;left:376px;top:969.27px;font-size:11.5px;line-height:1;color:#8a8886;font-weight:400;white-space:nowrap;letter-spacing:0.4px">Workflow</div>
<div style="position:absolute;left:376px;top:986px;width:690px;height:32px;background:#f4f4f4;border-radius:3px"></div>
<div style="position:absolute;left:388px;top:994.15px;font-size:14px;line-height:1;color:#323130;font-weight:400;white-space:nowrap;">Send notifcation to SharePoint user</div>
<svg style="position:absolute;left:1042px;top:999px;" width="12" height="7" viewBox="0 0 12 7"><path d="M0 0h12L6 7z" fill="#3b3a39"/></svg>
<div style="position:absolute;left:339px;top:108px;width:12px;height:931px;background:linear-gradient(90deg,rgba(0,0,0,0) 0%,rgba(0,0,0,0.03) 100%)"></div>
<div style="position:absolute;left:351px;top:108px;width:1px;height:931px;background:rgba(0,0,0,0.1)"></div>
<div style="position:absolute;left:119px;top:108px;width:12px;height:931px;background:linear-gradient(90deg,rgba(0,0,0,0) 0%,rgba(0,0,0,0.03) 100%)"></div>
<div style="position:absolute;left:131px;top:108px;width:1px;height:931px;background:rgba(0,0,0,0.09)"></div>
<div style="position:absolute;left:0px;top:0px;width:1px;height:1px;background:#000"></div>
<div style="position:absolute;left:1439px;top:0px;width:1px;height:1px;background:#000"></div>
</body></html>
